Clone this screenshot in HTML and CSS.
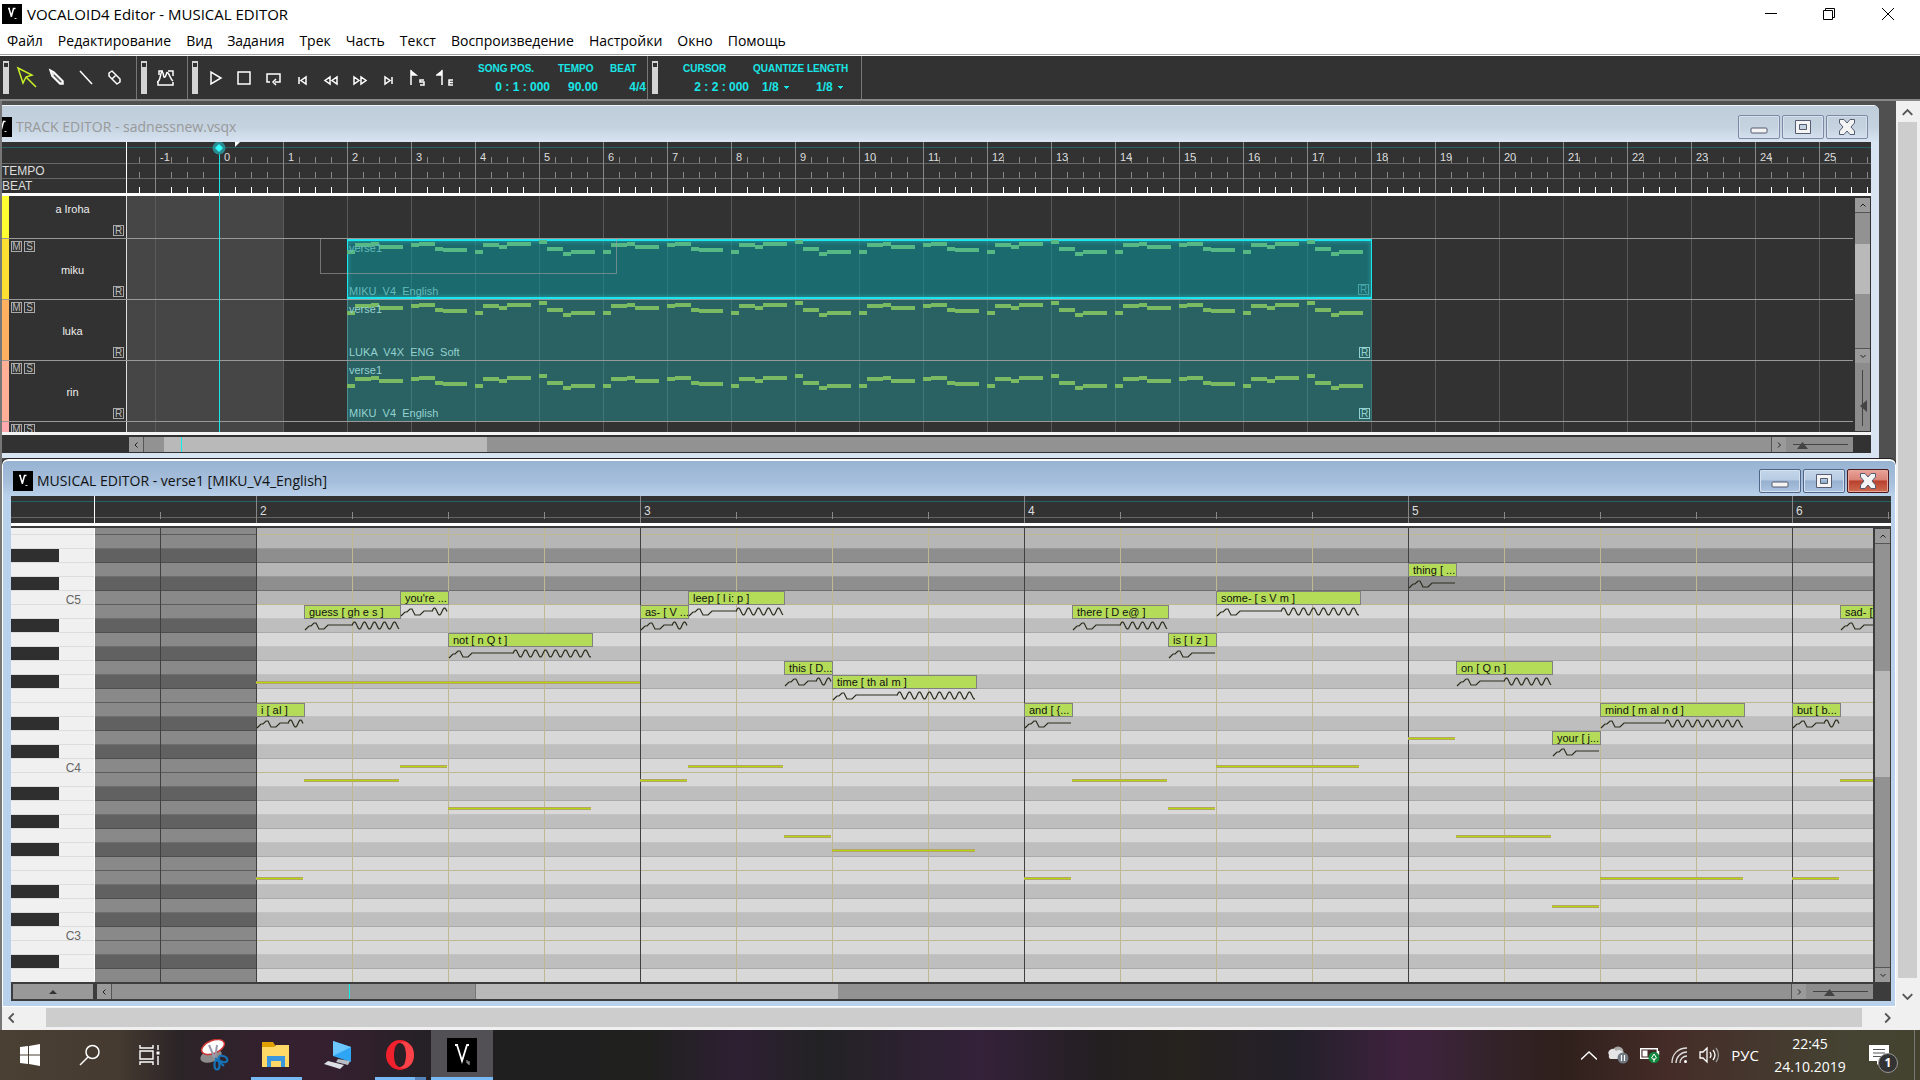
FILE: index.html
```
<!DOCTYPE html>
<html lang="ru">
<head>
    <meta charset="UTF-8">
    <meta name="viewport" content="width=device-width, initial-scale=1.0">
    <title>VOCALOID4 Editor - MUSICAL EDITOR</title>
    <link rel="stylesheet" href="styles.css">
</head>
<body>
    <svg class="defs">
        <symbol id="logo" viewBox="0 0 20 20">
            <rect width="20" height="20" fill="#000"/>
            <path d="M6 4.500h2M7 4.500l2.500 8.500M9.500 12l2-7.500h2" fill="none" stroke="#fff" stroke-width="1.500"/>
            <path d="M12.500 14.500h2" stroke="#ddd"/>
        </symbol>
        <symbol id="win-min" viewBox="0 0 18 16">
            <rect x="1" y="9" width="16" height="5" rx="1" fill="#f4f4f4" stroke="#555b70"/>
        </symbol>
        <symbol id="win-max" viewBox="0 0 18 16">
            <path d="M1.500 1.500h15v13h-15zM5.500 5.500v5h7v-5z" fill="#f4f4f4" fill-rule="evenodd" stroke="#555b70"/>
        </symbol>
        <symbol id="win-close" viewBox="0 0 18 16">
            <path d="M1.500 .5h4.500L9 4l3-3.500h4.500v3.500L13 8l3.500 4v3.500H12L9 12l-3 3.500H1.500V12L5 8 1.500 4z" fill="#f4f4f4" stroke="#555b70"/>
        </symbol>
        <symbol id="up" viewBox="0 0 10 10"><path d="M2.500 6.500L5 4l2.500 2.500" fill="none" stroke="currentColor"/></symbol>
        <symbol id="down" viewBox="0 0 10 10"><path d="M2.500 4L5 6.500 7.500 4" fill="none" stroke="currentColor"/></symbol>
        <symbol id="left" viewBox="0 0 10 10"><path d="M6.500 2.500L4 5l2.500 2.500" fill="none" stroke="currentColor"/></symbol>
        <symbol id="right" viewBox="0 0 10 10"><path d="M4 2.500L6.500 5 4 7.500" fill="none" stroke="currentColor"/></symbol>
    </svg>

    <header class="titlebar">
        <svg class="logo"><use href="#logo"/></svg>
        <h1>VOCALOID4 Editor - MUSICAL EDITOR</h1>
        <button aria-label="Свернуть"><svg width="12" height="12"><path d="M0 5.500h12" stroke="#000"/></svg></button>
        <button aria-label="Восстановить"><svg width="12" height="12"><path d="M.5 2.500h9v9h-9zM2.500 2.500v-2h9v9h-2" fill="none" stroke="#000"/></svg></button>
        <button aria-label="Закрыть"><svg width="12" height="12"><path d="M0 0l12 12M12 0L0 12" stroke="#000"/></svg></button>
    </header>

    <nav class="menu">
        <a href="#">Файл</a>
        <a href="#">Редактирование</a>
        <a href="#">Вид</a>
        <a href="#">Задания</a>
        <a href="#">Трек</a>
        <a href="#">Часть</a>
        <a href="#">Текст</a>
        <a href="#">Воспроизведение</a>
        <a href="#">Настройки</a>
        <a href="#">Окно</a>
        <a href="#">Помощь</a>
    </nav>

    <div class="toolbar">
        <div class="group tools">
            <span class="grip"></span>
            <button class="active" aria-label="Arrow"><svg viewBox="0 0 24 24"><path d="M3 2l14 7-6 2-3 6zM11 11l10 10" /></svg></button>
            <button aria-label="Pencil"><svg viewBox="0 0 24 24"><path d="M6 4l4 2 9 9v3h-3L8 10z" fill="#ddd"/><path d="M10 9l7 7" stroke="#555"/></svg></button>
            <button aria-label="Line"><svg viewBox="0 0 24 24"><path d="M7 5l12 13"/></svg></button>
            <button aria-label="Eraser"><svg viewBox="0 0 24 24"><path d="M10 5l8 8v3l-3 2-8-8V7zM14 9l-4 4" stroke-linejoin="round"/></svg></button>
        </div>
        <div class="group control">
            <span class="grip"></span>
            <button aria-label="Control track"><svg viewBox="0 0 24 24"><path d="M6 9V5h4M15 5h5v5M5 16v3h15v-3M4 16c4 0 3-10 5-10s1 7 3 5 1-6 3-4 2 6 5 8"/></svg></button>
        </div>
        <div class="group transport">
            <span class="grip"></span>
            <button aria-label="Play"><svg viewBox="0 0 24 24"><path d="M7 6v12l10-6z"/></svg></button>
            <button aria-label="Stop"><svg viewBox="0 0 24 24"><path d="M5 6h12v12H5z"/></svg></button>
            <button aria-label="Loop"><svg viewBox="0 0 24 24"><path d="M8 16H5V8h13v8h-5M14 13l-3 3 3 3"/></svg></button>
            <button aria-label="To start"><svg viewBox="0 0 24 24"><path d="M8 11v7M15 11v7l-5-3.500z"/></svg></button>
            <button aria-label="Rewind"><svg viewBox="0 0 24 24"><path d="M10 11v7l-5-3.500zM17 11v7l-5-3.500z"/></svg></button>
            <button aria-label="Forward"><svg viewBox="0 0 24 24"><path d="M5 11v7l5-3.500zM12 11v7l5-3.500z"/></svg></button>
            <button aria-label="To end"><svg viewBox="0 0 24 24"><path d="M7 11v7l5-3.500zM14 11v7"/></svg></button>
            <button aria-label="Start marker"><svg viewBox="0 0 24 24"><path d="M4 4v15M4 5l5 4H4z" fill="#fff"/><path d="M17 14h-4v2h4v3h-4"/></svg></button>
            <button aria-label="End marker"><svg viewBox="0 0 24 24"><path d="M6 4v15M6 5L1 9h5z" fill="#fff"/><path d="M17 14h-4v5h4M13 16.500h4"/></svg></button>
            <div class="readout pos"><span>SONG POS.</span><b>0 : 1 : 000</b></div>
            <div class="readout tempo"><span>TEMPO</span><b>90.00</b></div>
            <div class="readout beat"><span>BEAT</span><b>4/4</b></div>
        </div>
        <div class="group cursor">
            <span class="grip"></span>
            <div class="readout cpos"><span>CURSOR</span><b>2 : 2 : 000</b></div>
            <div class="readout quant">
                <label for="quantize">QUANTIZE</label>
                <select id="quantize"><option>1/8</option></select>
            </div>
            <div class="readout quant">
                <label for="length">LENGTH</label>
                <select id="length"><option>1/8</option></select>
            </div>
        </div>
    </div>

    <main class="workspace">
        <div class="desktop">

            <section class="window track-window">
                <div class="caption">
                    <svg class="logo"><use href="#logo"/></svg>
                    <h2>TRACK EDITOR - sadnessnew.vsqx</h2>
                    <button aria-label="Minimize"><svg><use href="#win-min"/></svg></button>
                    <button aria-label="Maximize"><svg><use href="#win-max"/></svg></button>
                    <button aria-label="Close"><svg><use href="#win-close"/></svg></button>
                </div>
                <div class="track-body">
                    <div class="track-head">
                        <div class="head-labels"><span>TEMPO</span><span>BEAT</span></div>
                        <div class="track-ruler" id="trackRuler"></div>
                    </div>
                    <div class="track-view">
                        <div class="tracks" id="tracks"></div>
                        <div class="scroll vertical">
                            <button aria-label="Up"><svg><use href="#up"/></svg></button>
                            <div class="rail">
                                <span class="thumb"></span>
                            </div>
                            <button aria-label="Down"><svg><use href="#down"/></svg></button>
                            <svg class="zoom-v" viewBox="0 0 15 68"><path d="M7.500 7v56" stroke="#444"/><path d="M12 37v12l-7-6z" fill="#444"/></svg>
                        </div>
                    </div>
                    <div class="track-foot">
                        <div class="scroll horizontal">
                            <button aria-label="Left"><svg><use href="#left"/></svg></button>
                            <div class="rail">
                                <span class="thumb"></span>
                                <i class="mark"></i>
                            </div>
                            <button aria-label="Right"><svg><use href="#right"/></svg></button>
                            <svg class="zoom-h" viewBox="0 0 67 15"><path d="M7 7.500h55" stroke="#444"/><path d="M11 12h11l-5.500-7z" fill="#444"/></svg>
                        </div>
                    </div>
                    <div class="playhead"></div>
                    <svg class="playdot" viewBox="0 0 14 14"><circle cx="7" cy="7" r="6.500" fill="#2a8c90"/><path d="M7 3l4 4-4 4-4-4z" fill="#3ff"/></svg>
                    <svg class="startflag" viewBox="0 0 5 5"><path d="M0 0h5L0 5z" fill="#fff"/></svg>
                </div>
            </section>

            <section class="window musical-window">
                <div class="caption">
                    <svg class="logo"><use href="#logo"/></svg>
                    <h2>MUSICAL EDITOR - verse1 [MIKU_V4_English]</h2>
                    <button aria-label="Minimize"><svg><use href="#win-min"/></svg></button>
                    <button aria-label="Maximize"><svg><use href="#win-max"/></svg></button>
                    <button class="close" aria-label="Close"><svg><use href="#win-close"/></svg></button>
                </div>
                <div class="musical-body">
                    <div class="roll-ruler"><div class="roll-bars" id="rollRuler"></div></div>
                    <div class="roll-view">
                        <div class="keys"><div class="rows" id="keys"></div></div>
                        <div class="roll">
                            <div class="rows preroll" id="preroll"></div>
                            <div class="rows lanes" id="lanes"></div>
                            <div class="notes" id="notes"></div>
                        </div>
                        <div class="scroll vertical">
                            <button aria-label="Up"><svg><use href="#up"/></svg></button>
                            <div class="rail">
                                <span class="thumb"></span>
                            </div>
                            <button aria-label="Down"><svg><use href="#down"/></svg></button>
                        </div>
                    </div>
                    <div class="roll-foot">
                        <button class="params" aria-label="Control parameters"><svg width="8" height="5"><path d="M0 5h8L4 1z" fill="#333"/></svg></button>
                        <div class="scroll horizontal">
                            <button aria-label="Left"><svg><use href="#left"/></svg></button>
                            <div class="rail">
                                <span class="thumb"></span>
                                <i class="mark"></i>
                            </div>
                            <button aria-label="Right"><svg><use href="#right"/></svg></button>
                            <svg class="zoom-h" viewBox="0 0 67 15"><path d="M7 7.500h55" stroke="#444"/><path d="M18 12h11l-5.500-7z" fill="#444"/></svg>
                        </div>
                    </div>
                </div>
            </section>
        </div>

        <div class="page-scroll down">
            <button aria-label="Up"><svg><use href="#up"/></svg></button>
            <span class="thumb"></span>
            <button aria-label="Down"><svg><use href="#down"/></svg></button>
        </div>
        <div class="page-scroll across">
            <button aria-label="Left"><svg><use href="#left"/></svg></button>
            <span class="thumb"></span>
            <button aria-label="Right"><svg><use href="#right"/></svg></button>
        </div>
    </main>

    <footer class="taskbar">
        <button aria-label="Пуск"><svg width="20" height="22" viewBox="0 0 20 22"><path d="M0 3l8-1v8.500H0zM9 2l11-2v10.500H9zM0 11.500h8V20l-8-1zM9 11.500h11V22L9 20z" fill="#fff"/></svg></button>
        <button aria-label="Поиск"><svg width="22" height="22" viewBox="0 0 22 22" fill="none" stroke="#fff" stroke-width="1.500"><circle cx="13.500" cy="8" r="6.500"/><path d="M9 13l-8 8"/></svg></button>
        <button aria-label="Просмотр задач"><svg width="22" height="22" viewBox="0 0 22 22" fill="none" stroke="#fff" stroke-width="1.400"><path d="M1 1v3h13V1M1 7h13v8H1zM1 21v-3h13v3M19 1v5M19 12v9"/><path d="M17.500 7.500h3v3h-3z" fill="#fff" stroke="none"/></svg></button>
        <button class="app" aria-label="Ножницы"><svg width="30" height="32" viewBox="0 0 30 32"><ellipse cx="12" cy="17" rx="11" ry="6" fill="#8c8c8c" transform="rotate(-18 12 17)"/><ellipse cx="14" cy="8" rx="12" ry="6.500" fill="#fff" stroke="#c33" stroke-width="1.500" transform="rotate(-22 14 8)"/><path d="M10 6l6 14M18 6l-2 14" stroke="#99a" stroke-width="2"/><g fill="none" stroke="#1673b8" stroke-width="2.200"><ellipse cx="24" cy="20" rx="4.500" ry="3" transform="rotate(20 24 20)"/><ellipse cx="18" cy="26" rx="2.500" ry="4.500"/><path d="M16 19l9 8"/></g></svg></button>
        <button class="app open" aria-label="Проводник"><svg width="28" height="26" viewBox="0 0 28 26"><path d="M0 0h11l2 3v4H0z" fill="#e0a100"/><path d="M0 5h12l2-2h13v22H0z" fill="#ffd968"/><path d="M5 25V14h18v11h-4v-6H9v6z" fill="#3b97dd"/></svg></button>
        <button class="app" aria-label="Компьютер"><svg width="28" height="28" viewBox="0 0 28 28"><path d="M9 0l18 6v15L9 15z" fill="#2fa6f5"/><path d="M9 0l18 6L9 15z" fill="#6cc7ff"/><path d="M14 18l12 2-2 4-12-3z" fill="#b8bec6"/><path d="M4 20l16 4-4 4L0 23z" fill="#dde1e6"/></svg></button>
        <button class="app open more" aria-label="Opera"><svg width="30" height="32" viewBox="0 0 30 32"><path d="M15 1a14 15 0 100 30 14 15 0 000-30zm0 3c4 0 6 5 6 12s-2 12-6 12-6-5-6-12 2-12 6-12z" fill="#f0202c" fill-rule="evenodd"/><path d="M15 4c4 0 6 5 6 12s-2 12-6 12c3 3 14 1 14-12S18 1 15 4z" fill="#ff5b5b" opacity=".6"/></svg></button>
        <button class="app open current" aria-label="VOCALOID4"><svg width="30" height="34" viewBox="0 0 30 34"><path d="M0 0h30v34H0z" fill="#000"/><path d="M8 7h3M10 7l5 16 5-16h2" fill="none" stroke="#fff" stroke-width="1.800"/><path d="M20 22v3h2M22 23v4" fill="none" stroke="#bbb"/></svg></button>
        <div class="tray">
            <svg width="16" height="9" viewBox="0 0 16 9"><path d="M0 8.500l8-7.500 8 7.500" fill="none" stroke="#fff" stroke-width="1.400"/></svg>
            <svg width="21" height="18" viewBox="0 0 21 18"><circle cx="10" cy="6" r="5.500" fill="#aaa"/><path d="M1 9a4 4 0 017-4 5 5 0 018 4l-3 4H4q-4 0-3-4z" fill="#e4e4e4"/><circle cx="15" cy="12" r="5.500" fill="#6f7780"/><path d="M13.500 9v6M16.500 9v6" stroke="#fff" stroke-width="1.200"/></svg>
            <svg width="20" height="16" viewBox="0 0 20 16"><path d="M.7 1.700h16.600v9.600H.7zM18.500 4v4" fill="none" stroke="#fff" stroke-width="1.400"/><path d="M2.500 3.500h5v6h-5z" fill="#fff"/><circle cx="14" cy="10.500" r="5.500" fill="#10893e"/><path d="M14 7l2.500 4-2.500 2-2.500-2zM14 11v4" fill="none" stroke="#fff"/></svg>
            <svg width="17" height="17" viewBox="0 0 17 17" fill="none" stroke="#ddd" stroke-width="1.300"><path d="M1 16C1 7 7 1 16 1M5 16C5 10 10 5 16 5M9 16c0-4 3-7 7-7"/><circle cx="14.500" cy="14.500" r="1.500" fill="#fff" stroke="none"/></svg>
            <svg width="21" height="18" viewBox="0 0 21 18" fill="none" stroke="#fff" stroke-width="1.300"><path d="M1 6h3l4-4v14l-4-4H1zM11 6q2 3 0 6M14 4q4 5 0 10"/><path d="M17 2q5 7 0 14" stroke="#999"/></svg>
            <span class="lang">РУС</span>
            <div class="clock"><span>22:45</span><span>24.10.2019</span></div>
            <div class="notify">
                <svg width="20" height="20" viewBox="0 0 20 20"><path d="M0 0h20v16h-8l-4 4v-4H0z" fill="#fff"/><path d="M4 4.500h12M4 8h12M4 11.500h8" stroke="#555"/></svg>
                <b>1</b>
            </div>
        </div>
    </footer>

    <script src="script.js"></script>
</body>
</html>
```
FILE: styles.css
```
*{
    box-sizing: border-box;
}
body{
    margin: 0px;
    height: 100vh;
    display: flex;
    flex-direction: column;
    overflow: hidden;
    background: #fff;
    font-family: "Liberation Sans", Arial, sans-serif;
    font-size: 11px;
}
h1, h2{
    margin: 0px;
    font-weight: normal;
}
button{
    border: none;
    padding: 0px;
    background: none;
    font: inherit;
    color: inherit;
    display: flex;
    align-items: center;
    justify-content: center;
    flex: none;
}
.defs{
    position: absolute;
    width: 0px;
    height: 0px;
}
.logo{
    width: 20px;
    height: 20px;
    flex: none;
}

/* main window */
.titlebar{
    display: flex;
    align-items: center;
    height: 28px;
    padding: 0px 2px;
}
.titlebar h1{
    flex: 1;
    margin-left: 5px;
    font: 15px "Open Sans", "Noto Sans", sans-serif;
}
.titlebar button{
    width: 58px;
    height: 28px;
}
.titlebar button:last-child{
    width: 60px;
}
.menu{
    display: flex;
    align-items: center;
    gap: 15px;
    height: 27px;
    padding: 0px 7px 1px;
    border-bottom: 1px solid #a0a0a0;
    font: 14px "Open Sans", "Noto Sans", sans-serif;
}
.menu a{
    color: #000;
    text-decoration: none;
}

/* toolbar */
.toolbar{
    display: flex;
    height: 45px;
    margin-top: 1px;
    background: #323232;
    border-bottom: 2px solid #888;
}
.group{
    display: flex;
    align-items: center;
    padding-left: 3px;
    border-right: 1px solid #777;
}
.group + .group{
    padding-left: 4px;
}
.grip{
    width: 6px;
    height: 33px;
    margin-right: 3px;
    background: #d4d4d4;
    border: 1px solid #d4d4d4;
    border-top-width: 2px;
}
.grip::before{
    content: "";
    display: block;
    width: 4px;
    height: 4px;
    background: #323232;
}
.group button{
    width: 29px;
    height: 40px;
}
.group svg{
    width: 24px;
    height: 24px;
    fill: none;
    stroke: #fff;
    stroke-width: 1.5;
}
.group .active svg{
    stroke: #c8f028;
}
.tools{
    width: 137px;
}
.control{
    width: 51px;
}
.transport{
    width: 460px;
}
.cursor{
    width: 214px;
}
.readout{
    display: flex;
    flex-direction: column;
    gap: 4px;
    color: #19e6e6;
    font-weight: bold;
}
.readout span, .readout label{
    font-size: 10px;
    line-height: 14px;
}
.readout b, .readout select{
    font-size: 12px;
    line-height: 14px;
    text-align: right;
}
.pos{
    width: 72px;
    margin-left: 16px;
}
.tempo{
    width: 40px;
    margin-left: 8px;
}
.beat{
    width: 36px;
    margin-left: 12px;
}
.cpos{
    width: 66px;
    margin-left: 22px;
}
.quant{
    width: 50px;
    margin-left: 4px;
}
.readout select{
    appearance: none;
    border: none;
    padding: 0px 0px 0px 9px;
    width: 44px;
    color: #19e6e6;
    font-family: inherit;
    font-weight: bold;
    text-align: left;
    background: linear-gradient(#19e6e6, #19e6e6) 31px 6px / 5px 1px no-repeat, linear-gradient(#19e6e6, #19e6e6) 32px 7px / 3px 1px no-repeat, linear-gradient(#19e6e6, #19e6e6) 33px 8px / 1px 1px no-repeat;
}

/* workspace */
.workspace{
    flex: 1;
    min-height: 0px;
    display: grid;
    grid-template-columns: 1fr 24px;
    grid-template-rows: 1fr 23px;
    border-left: 2px solid #777;
    background: #f0f0f0;
}
.desktop{
    display: flex;
    flex-direction: column;
    min-width: 0px;
    min-height: 0px;
    padding-top: 4px;
    background: #505050;
    overflow: hidden;
}
.window{
    display: flex;
    flex-direction: column;
    overflow: hidden;
}
.track-window{
    flex: none;
    margin-right: 17px;
    padding: 0px 8px 5px 0px;
    border-top-right-radius: 6px;
    background: #d8e4f1;
}
.musical-window{
    flex: 1;
    min-height: 0px;
    margin-top: 1px;
    padding: 0px 4px 5px 8px;
    border: 1px solid #fff;
    border-top-width: 2px;
    border-radius: 6px 6px 0px 0px;
    outline: 1px solid #222;
    background: #b9d1ea;
}
.caption{
    display: flex;
    align-items: flex-end;
    gap: 2px;
    flex: none;
    height: 37px;
    padding-bottom: 3px;
}
.track-window .caption{
    margin-right: -8px;
    padding-right: 11px;
    border-top: 1px solid #eef3f8;
    background: linear-gradient(#bfcddb, #c5d3e1 60%, #d8e4f1);
    color: #999;
}
.track-window .logo{
    margin-left: -10px;
}
.musical-window .caption{
    height: 35px;
    margin: 0px -4px 0px -8px;
    padding: 0px 6px 3px 10px;
    background: linear-gradient(#98b4d3, #a5bedb 60%, #b9d1ea);
    color: #111;
}
.caption .logo{
    margin-bottom: 2px;
}
.caption h2{
    flex: 1;
    margin-left: 2px;
    font: 14px/24px "Open Sans", "Noto Sans", sans-serif;
}
.caption button{
    width: 42px;
    height: 24px;
    border: 1px solid #7d8aa6;
    border-radius: 2px;
    box-shadow: inset 0px 0px 0px 1px #d6e0ee;
}
.caption button svg{
    width: 18px;
    height: 16px;
}
.musical-window .caption button{
    border-color: #4f6688;
    background: linear-gradient(#c3d5e9, #b7cce3 45%, #96b0cf 50%, #a9c3e0);
}
.musical-window .caption .close{
    border-color: #4c1a1c;
    background: linear-gradient(#e9a399, #d98377 45%, #b8402c 50%, #cf6c50);
    box-shadow: inset 0px 0px 0px 1px #e8a79c;
}

/* scrollbars inside the editors */
.scroll{
    display: flex;
    flex: none;
    background: #929292;
    color: #222;
}
.scroll.vertical{
    flex-direction: column;
    width: 15px;
}
.scroll button{
    width: 15px;
    height: 15px;
    background: #9a9a9a;
}
.scroll button svg{
    width: 10px;
    height: 10px;
}
.vertical button:first-child{
    border-bottom: 1px solid #555;
}
.vertical .rail + button{
    border-top: 1px solid #555;
}
.horizontal button:first-child{
    border-right: 1px solid #555;
}
.horizontal .rail + button{
    border-left: 1px solid #555;
}
.rail{
    flex: 1;
    position: relative;
}
.rail .thumb{
    display: block;
    background: #b9b9b9;
}
.mark{
    position: absolute;
    top: 0px;
    width: 1px;
    height: 15px;
    background: #1ee;
}

/* track editor */
.track-body{
    position: relative;
    background: #323232;
    color: #ddd;
    overflow: hidden;
}
.track-head{
    display: flex;
    height: 54px;
    border-bottom: 3px solid #fff;
    background: linear-gradient(#256266, #256266) 0px 5px / 100% 1px no-repeat, linear-gradient(#666, #666) 0px 21px / 100% 1px no-repeat, linear-gradient(#666, #666) 0px 36px / 100% 1px no-repeat;
}
.head-labels{
    display: flex;
    flex-direction: column;
    width: 125px;
    flex: none;
    padding-top: 22px;
    border-right: 1px solid #fff;
    font-size: 12px;
    line-height: 15px;
}
.track-ruler{
    flex: 1;
    display: flex;
    padding-left: 28px;
    overflow: hidden;
    background: linear-gradient(90deg, #888 1px, transparent 1px) 28px 0px / 64px 100% repeat-x, linear-gradient(90deg, #888 1px, transparent 1px) 28px 15px / 16px 6px repeat-x, linear-gradient(90deg, #888 1px, transparent 1px) 28px 30px / 16px 6px repeat-x, linear-gradient(90deg, #fff 1px, transparent 1px) 28px 45px / 16px 6px repeat-x;
}
.track-ruler span{
    flex: none;
    width: 64px;
    padding: 9px 0px 0px 5px;
    line-height: 13px;
}
.track-view{
    display: flex;
    height: 236px;
    padding-right: 1px;
}
.track-view .scroll{
    margin: 2px 0px 1px 2px;
}
.track-view .thumb{
    height: 50px;
    margin-top: 31px;
}
.zoom-v{
    width: 15px;
    height: 68px;
    background: #8c8c8c;
}
.zoom-h{
    width: 67px;
    height: 15px;
    flex: none;
    background: #8c8c8c;
}
.tracks{
    flex: 1;
    min-width: 0px;
    overflow: hidden;
}
.track:first-child{
    margin-top: -18px;
}
.track{
    display: flex;
    height: 61px;
    border-bottom: 1px solid #999;
}
.track-info{
    display: grid;
    grid-template-columns: 13px 1fr 13px;
    grid-template-rows: 1fr 13px 1fr;
    width: 125px;
    flex: none;
    padding: 2px;
    border-left: 7px solid var(--color);
    border-right: 1px solid #ddd;
}
.track-info .ms{
    display: flex;
    gap: 2px;
}
.track-info .name{
    grid-column: 1 / 4;
    grid-row: 2;
    text-align: center;
    line-height: 15px;
    padding-left: 10px;
    color: #eee;
}
.track-info .rec{
    grid-column: 3;
    grid-row: 3;
    align-self: end;
    justify-self: end;
}
.box{
    width: 11px;
    height: 11px;
    border: 1px solid #aaa;
    color: #bbb;
    font-size: 10px;
    line-height: 9px;
}
.lane{
    flex: 1;
    position: relative;
    overflow: hidden;
    background: linear-gradient(90deg, #5a5a5a 1px, transparent 1px) 28px 0px / 64px 100% repeat-x, linear-gradient(90deg, #464646 156px, transparent 156px);
}
.clip{
    position: absolute;
    top: 0px;
    height: 60px;
    background: rgba(33, 143, 147, .5);
    color: #93d2cf;
    border-left: 1px solid #4a9090;
}
.clip .part, .clip .singer{
    position: absolute;
    left: 1px;
    line-height: 13px;
    white-space: pre;
}
.clip .part{
    top: 3px;
}
.clip .singer{
    bottom: 1px;
}
.clip .box{
    position: absolute;
    right: 2px;
    bottom: 2px;
    border-color: #93d2cf;
    color: #93d2cf;
}
.clip svg{
    position: absolute;
    left: -1px;
    top: 0px;
    width: 100%;
    height: 60px;
    fill: #7aba62;
}
.clip.selected{
    border: 1px solid #19e6ee;
    border-width: 2px 1px;
    box-shadow: inset 0px 0px 5px rgba(60, 200, 205, .6);
    background: rgba(10, 146, 154, .58);
    color: #62bcbc;
}
.clip.selected svg{
    fill: #55b885;
    top: -2px;
}
.clip.selected .box{
    border-color: #45a5a8;
    color: #45a5a8;
}
.clip.selected .part{
    top: 1px;
}
.clip.selected .singer{
    bottom: -1px;
}
.ghost{
    position: absolute;
    top: -1px;
    height: 36px;
    border: 1px solid rgba(160, 160, 160, .6);
}
.track-foot{
    display: flex;
    padding: 2px 18px 1px 127px;
    border-top: 3px solid #f4f4f4;
}
.track-foot .scroll, .roll-foot .scroll{
    flex: 1;
}
.track-foot .thumb{
    width: 323px;
    height: 15px;
    margin-left: 20px;
}
.track-foot .mark{
    left: 37px;
}
.playhead{
    position: absolute;
    left: 217px;
    top: 0px;
    width: 1px;
    height: 290px;
    background: #19e6e6;
}
.playdot{
    position: absolute;
    left: 210px;
    top: -1px;
    width: 14px;
    height: 14px;
}
.startflag{
    position: absolute;
    left: 233px;
    top: 0px;
    width: 5px;
    height: 5px;
}

/* musical editor */
.musical-body{
    flex: 1;
    min-height: 0px;
    display: flex;
    flex-direction: column;
    background: #3c3c3c;
}
.roll-ruler{
    flex: none;
    height: 32px;
    padding-left: 83px;
    border-bottom: 2px solid #3c3c3c;
    background: linear-gradient(#fff, #fff) 0px 27px / 100% 3px no-repeat, linear-gradient(#256266, #256266) 0px 5px / 100% 1px no-repeat, linear-gradient(#666, #666) 0px 21px / 100% 1px no-repeat, #323232;
}
.roll-bars{
    display: flex;
    height: 27px;
    overflow: hidden;
    padding-left: 161px;
    border-left: 1px solid #fff;
    background: linear-gradient(90deg, #888 1px, transparent 1px) 161px 0px / 384px 100% repeat-x, linear-gradient(90deg, #888 1px, transparent 1px) 65px 16px / 96px 7px repeat-x;
}
.roll-bars span{
    flex: none;
    width: 384px;
    padding: 8px 0px 0px 4px;
    line-height: 14px;
    font-size: 12px;
    color: #ddd;
}
.roll-view{
    flex: 1;
    min-height: 0px;
    display: flex;
    padding-right: 1px;
}
.roll-view .scroll{
    margin: 1px 0px 0px 2px;
}
.roll-view .thumb{
    height: 25%;
    margin-top: 127px;
}
.keys{
    width: 84px;
    flex: none;
    overflow: hidden;
    background: #f0f0f0;
    border-right: 1px solid #fff;
}
.rows{
    margin-top: -7px;
}
.rows div{
    height: 14px;
    border-bottom: 1px solid var(--line);
    background: var(--fill);
}
.keys .rows div{
    --line: #dcdcdc;
    --fill: #f0f0f0;
    padding-right: 13px;
    text-align: right;
    line-height: 18px;
    font-size: 12px;
    color: #666;
}
.keys .rows .black{
    background: linear-gradient(90deg, #2f2f2f 48px, transparent 48px) 0px 0px / 100% 14px;
}
.roll{
    flex: 1;
    min-width: 0px;
    display: flex;
    position: relative;
    overflow: hidden;
}
.preroll{
    width: 161px;
    flex: none;
    position: relative;
}
.preroll .white{
    --fill: #898989;
    --line: #6f6f6f;
}
.preroll .black{
    --fill: #616161;
    --line: #4e4e4e;
}
.preroll .edge{
    --line: #5c5c5c;
}
.lanes{
    flex: 1;
    position: relative;
}
.lanes .white{
    --fill: #d8d8d8;
    --line: #c3c3c3;
}
.lanes .black{
    --fill: #bebebe;
    --line: #a9a9a9;
}
.lanes .white.high{
    --fill: #b6b6b6;
    --line: #999;
}
.lanes .black.high{
    --fill: #8e8e8e;
    --line: #6e6e6e;
}
.lanes .edge, .lanes .edge.high{
    --line: #bfb893;
}
.preroll::after, .lanes::after{
    content: "";
    position: absolute;
    inset: 0px;
    background: linear-gradient(90deg, #404040 1px, transparent 1px) 0px 0px / 384px 100%, linear-gradient(90deg, #bfb893 1px, transparent 1px) 0px 0px / 96px 100%;
}
.preroll::after{
    background: linear-gradient(90deg, #404040 1px, transparent 1px) 65px 0px / 384px 100%;
}
.notes{
    position: absolute;
    left: 161px;
    right: 0px;
    top: -7px;
    bottom: 0px;
}
.note{
    position: absolute;
    height: 14px;
    padding-left: 4px;
    border: 1px solid #808080;
    background: #b4dc58;
    color: #111;
    line-height: 13px;
    white-space: nowrap;
    overflow: hidden;
}
.vibrato{
    position: absolute;
    height: 14px;
    fill: none;
    stroke: #2c2c1c;
    stroke-width: 1.2;
}
.pitch{
    position: absolute;
    height: 3px;
    background: #b4d810;
    border: 1px solid #b5a565;
    border-width: 1px 0px;
}
.roll-foot{
    flex: none;
    display: flex;
    gap: 4px;
    padding: 2px 18px 2px 2px;
}
.params{
    width: 80px;
    height: 15px;
    background: #999;
}
.roll-foot .thumb{
    width: 363px;
    height: 15px;
    margin-left: 363px;
    border-left: 1px solid #777;
}
.roll-foot .mark{
    left: 237px;
}

/* outer scrollbars */
.page-scroll{
    display: flex;
    color: #555;
}
.page-scroll button svg{
    width: 20px;
    height: 20px;
}
.page-scroll .thumb{
    flex: 1;
    background: #cdcdcd;
}
.page-scroll.down{
    flex-direction: column;
    padding: 0px 3px 0px 2px;
}
.down button{
    height: 21px;
}
.down .thumb + button{
    height: 29px;
    padding-top: 6px;
}
.page-scroll.across{
    grid-column: 1 / 3;
    padding: 1px 0px 3px 0px;
}
.across button{
    width: 18px;
    margin-right: 26px;
}
.across .thumb + button{
    margin: 0px 24px 0px 16px;
}

/* taskbar */
.taskbar{
    flex: none;
    display: flex;
    height: 50px;
    background: linear-gradient(90deg, #4a4033, #443a30 120px, #2b2427 180px, #35202f 290px, #33202e 350px, #262126 420px, #201f20 500px, #20201f 650px, #2e2033 740px, #222224 820px, #34213a 980px, #231f21 1100px, #26221e 1180px, #24202a 1300px, #3e223e 1400px, #3d233b 1430px, #33232a 1490px, #2f201c 1560px, #452c28 1670px, #454433 1850px, #44422f);
    color: #fff;
}
.taskbar button{
    width: 60px;
}
.taskbar .app{
    width: 62px;
    position: relative;
}
.taskbar .app:nth-child(4){
    margin-left: 3px;
}
.taskbar .open::after{
    content: "";
    position: absolute;
    left: 6px;
    right: 5px;
    bottom: 0px;
    height: 3px;
    background: #76b9f5;
}
.taskbar .more::after{
    background: linear-gradient(90deg, #76b9f5 40px, #5585b8 40px);
}
.taskbar .current{
    background: #525055;
}
.taskbar .current::after{
    left: 0px;
    right: 0px;
}
.tray{
    margin-left: auto;
    display: flex;
    align-items: center;
    gap: 11px;
    padding-right: 5px;
    margin-right: 5px;
    border-right: 1px solid #777;
    font: 15px/23px "Open Sans", "Noto Sans", sans-serif;
}
.clock{
    display: flex;
    flex-direction: column;
    width: 80px;
    text-align: center;
    font-size: 14px;
}
.notify{
    position: relative;
    width: 40px;
    height: 20px;
    margin-left: 8px;
}
.notify b{
    position: absolute;
    left: 9px;
    top: 8px;
    width: 20px;
    height: 20px;
    border: 1px solid #999;
    border-radius: 50%;
    background: #333;
    text-align: center;
    font-size: 12px;
    line-height: 18px;
}
```
FILE: script.js
```
const tracksEl = document.querySelector("#tracks");
const notesEl = document.querySelector("#notes");

const TOP_KEY = 77;
const BLACK = [1, 3, 6, 8, 10];

const tracks = [
    { name: "a Iroha", color: "#ffff32", rec: true },
    { name: "miku", color: "#ffe032", singer: "MIKU  V4  English", base: 11, selected: true, ms: true, rec: true },
    { name: "luka", color: "#ffb060", singer: "LUKA  V4X  ENG  Soft", base: 11, ms: true, rec: true },
    { name: "rin", color: "#ffb096", singer: "MIKU  V4  English", base: 23, ms: true, rec: true },
    { name: "", color: "#ffaaaf", ms: true }
];

// start and length are in eighths, vib tells if the note ends with vibrato
const notes = [
    { start: 0, len: 1, key: 64, text: "i [ aI ]", vib: true },
    { start: 1, len: 2, key: 71, text: "guess [ gh e s ]", vib: true },
    { start: 3, len: 1, key: 72, text: "you're ...", vib: true },
    { start: 4, len: 3, key: 69, text: "not [ n Q t ]", vib: true },
    { start: 8, len: 1, key: 71, text: "as- [ V ...", vib: true },
    { start: 9, len: 2, key: 72, text: "leep [ l i: p ]", vib: true },
    { start: 11, len: 1, key: 67, text: "this [ D...", vib: true },
    { start: 12, len: 3, key: 66, text: "time [ th aI m ]", vib: true },
    { start: 16, len: 1, key: 64, text: "and [ {...", vib: false },
    { start: 17, len: 2, key: 71, text: "there [ D e@ ]", vib: true },
    { start: 19, len: 1, key: 69, text: "is [ I z ]", vib: false },
    { start: 20, len: 3, key: 72, text: "some- [ s V m ]", vib: true },
    { start: 24, len: 1, key: 74, text: "thing [ ...", vib: false },
    { start: 25, len: 2, key: 67, text: "on [ Q n ]", vib: true },
    { start: 27, len: 1, key: 62, text: "your [ j...", vib: false },
    { start: 28, len: 3, key: 64, text: "mind [ m aI n d ]", vib: true },
    { start: 32, len: 1, key: 64, text: "but [ b...", vib: true },
    { start: 33, len: 2, key: 71, text: "sad- [", vib: true }
];

function ruler(id, from, to) {
    let html = "";
    for (let i = from; i <= to; i++) {
        html += `<span>${i}</span>`;
    }
    document.querySelector(id).innerHTML = html;
}

function miniNotes(base) {
    let rects = "";
    for (let rep = 0; rep < 4; rep++) {
        for (const n of notes) {
            if (n.start >= 32) continue;
            rects += `<rect x="${rep * 256 + n.start * 8}" y="${base - (n.key - 64)}" width="${n.len * 8}" height="4"/>`;
        }
    }
    return rects;
}

function drawTracks() {
    let html = "";
    for (const t of tracks) {
        let clip = "";
        if (t.singer) {
            clip = `<div class="clip ${t.selected ? "selected" : ""}" style="left:220px;width:1025px">
                <svg>${miniNotes(t.base)}</svg>
                <span class="part">verse1</span>
                <span class="singer">${t.singer}</span>
                <button class="box">R</button></div>`;
            if (t.selected) {
                clip += `<div class="ghost" style="left:193px;width:297px"></div>`;
            }
        }
        html += `<div class="track">
            <div class="track-info" style="--color:${t.color}">
                <div class="ms">${t.ms ? `<button class="box">M</button><button class="box">S</button>` : ""}</div>
                <span class="name">${t.name}</span>
                ${t.rec ? `<button class="box rec">R</button>` : ""}
            </div>
            <div class="lane">${clip}</div></div>`;
    }
    tracksEl.innerHTML = html;
}

function rows(id, labels) {
    let html = "";
    for (let key = TOP_KEY; key > 36; key--) {
        const step = key % 12;
        let cls = BLACK.includes(step) ? "black" : "white";
        if (key >= 72) cls += " high";
        if (step == 0 || step == 5) cls += " edge";
        html += `<div class="${cls}">${labels && step == 0 ? "C" + (key / 12 - 1) : ""}</div>`;
    }
    document.querySelector(id).innerHTML = html;
}

function vibratoPath(n) {
    const w = n.len * 48;
    let d = "M1 11L5 7L7 7L10 4L12 4L15 10L20 10L24 6";
    if (!n.vib) return d + `L${w - 1} 6`;
    const start = n.len == 1 ? 32 : n.len == 2 ? 48 : 65;
    d += `L${start} 6`;
    for (let x = start; x < w; x++) {
        d += `L${x} ${(6.5 - 3.5 * Math.sin((x - start) / 10 * Math.PI * 2)).toFixed(1)}`;
    }
    return d;
}

function drawNotes() {
    let html = `<div class="pitch" style="left:0px;top:160px;width:384px"></div>`;
    for (const n of notes) {
        const x = n.start * 48;
        const y = (TOP_KEY - n.key) * 14;
        const w = n.len * 48;
        html += `<div class="note" style="left:${x}px;top:${y}px;width:${w + 1}px">${n.text}</div>
            <svg class="vibrato" style="left:${x}px;top:${y + 14}px;width:${w}px"><path d="${vibratoPath(n)}"/></svg>
            <div class="pitch" style="left:${x}px;top:${y + 174}px;width:${w - 1}px"></div>`;
    }
    notesEl.innerHTML = html;
}

ruler("#trackRuler", -1, 25);
ruler("#rollRuler", 2, 6);
rows("#keys", true);
rows("#preroll", false);
rows("#lanes", false);
drawTracks();
drawNotes();
```
